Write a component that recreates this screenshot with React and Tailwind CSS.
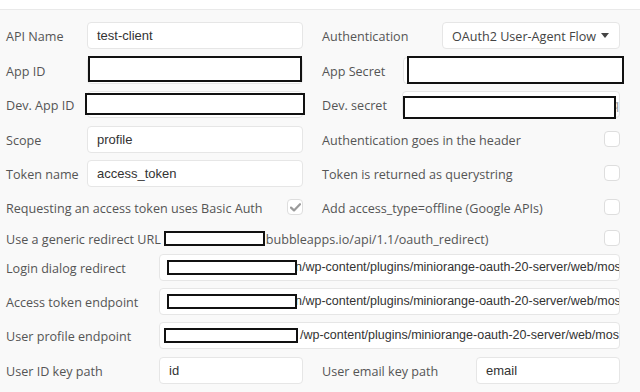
import React from "react";

const sans = "font-['Open_Sans',sans-serif]";
const arial = "font-['Liberation_Sans',Arial,sans-serif]";

function Label({ children, className = "" }) {
  return (
    <span className={`mt-[4px] text-[12.6px] text-[#555] whitespace-nowrap ${className}`}>{children}</span>
  );
}

function Field({ children, className = "", clip = true }) {
  return (
    <div
      className={`relative h-[27px] bg-white border border-[#e6e6e6] rounded-[4px] flex items-center px-[9px] text-[13px] text-[#333] whitespace-nowrap ${arial} ${clip ? "overflow-hidden" : ""} ${className}`}
    >
      {children}
    </div>
  );
}

// black redaction rectangle laid over a field
function Redact({ className = "" }) {
  return <div className={`absolute bg-white border-2 border-[#111] ${className}`} />;
}

function Check({ checked }) {
  return (
    <div className="w-[16px] h-[16px] rounded-[4px] border border-[#dedede] bg-white flex items-center justify-center">
      {checked && (
        <svg width="11" height="9" viewBox="0 0 11 9">
          <path d="M1 4.6 L4 7.4 L10 1.2" fill="none" stroke="#9a9a9a" strokeWidth="2.2" strokeLinecap="round" strokeLinejoin="round" />
        </svg>
      )}
    </div>
  );
}

function UrlField({ edge, peek }) {
  return (
    <Field className="flex-1">
      <Redact className={`left-[7px] top-[5px] h-[15px] ${edge}`} />
      <span className={`text-[12.5px] ${peek ? "pl-[126px]" : "pl-[131px]"}`}>
        {peek ? "n" : ""}/wp-content/plugins/miniorange-oauth-20-server/web/mos
      </span>
    </Field>
  );
}

export default function App() {
  return (
    <div className={`w-[640px] h-[392px] bg-[#f9f9f9] overflow-hidden ${sans}`}>
      <div className="h-[10px] bg-white border-b border-[#e9e9e9]" />

      {/* API name / authentication */}
      <div className="mt-[12px] h-[27px] flex items-center pl-[6px] pr-[20px]">
        <div className="w-[316px] flex items-center">
          <Label className="w-[81px]">API Name</Label>
          <Field className="w-[216px]">test-client</Field>
        </div>
        <div className="flex-1 flex items-center">
          <Label className="w-[120px]">Authentication</Label>
          <div className="flex-1 h-[27px] bg-white border border-[#e6e6e6] rounded-[4px] flex items-center pl-[9px] pr-[10px] text-[12.6px] text-[#444]">
            <span className="flex-1 mt-[3px]">OAuth2 User-Agent Flow</span>
            <svg width="8" height="5" viewBox="0 0 8 5">
              <path d="M0 0 H8 L4 5 Z" fill="#444" />
            </svg>
          </div>
        </div>
      </div>

      {/* App ID / App Secret */}
      <div className="mt-[8px] h-[27px] flex items-center pl-[6px] pr-[20px]">
        <div className="w-[316px] flex items-center">
          <Label className="w-[81px]">App ID</Label>
          <Field className="w-[216px]" clip={false}>
            <Redact className="left-0 right-0 top-[-2px] bottom-[1px]" />
          </Field>
        </div>
        <div className="flex-1 flex items-center">
          <Label className="w-[81px]">App Secret</Label>
          <Field className="flex-1" clip={false}>
            <Redact className="left-[3px] right-[-5px] top-[-2px] bottom-[-1px]" />
          </Field>
        </div>
      </div>

      {/* Dev App ID / Dev secret */}
      <div className="mt-[7px] h-[27px] flex items-center pl-[6px] pr-[20px]">
        <div className="w-[316px] flex items-center">
          <Label className="w-[81px]">Dev. App ID</Label>
          <Field className="w-[216px]" clip={false}>
            <Redact className="left-[-3px] right-[-3px] top-[1px] bottom-[2px]" />
          </Field>
        </div>
        <div className="flex-1 flex items-center">
          <Label className="w-[80px]">Dev. secret</Label>
          <Field className="flex-1 justify-end !px-0" clip={false}>
            <span className="text-[#999] text-[12px]">q</span>
            <Redact className="left-0 right-[3px] top-[4px] bottom-[-2px]" />
          </Field>
        </div>
      </div>

      {/* Scope */}
      <div className="mt-[8px] h-[27px] flex items-center pl-[6px] pr-[20px]">
        <div className="w-[316px] flex items-center">
          <Label className="w-[81px]">Scope</Label>
          <Field className="w-[216px]">profile</Field>
        </div>
        <div className="flex-1 flex items-center justify-between">
          <Label>Authentication goes in the header</Label>
          <Check />
        </div>
      </div>

      {/* Token name */}
      <div className="mt-[7px] h-[27px] flex items-center pl-[6px] pr-[20px]">
        <div className="w-[316px] flex items-center">
          <Label className="w-[81px]">Token name</Label>
          <Field className="w-[216px]">access_token</Field>
        </div>
        <div className="flex-1 flex items-center justify-between">
          <Label>Token is returned as querystring</Label>
          <Check />
        </div>
      </div>

      {/* basic auth / offline */}
      <div className="mt-[7px] h-[27px] flex items-center pl-[6px] pr-[20px]">
        <div className="w-[316px] flex items-center">
          <div className="w-[297px] flex items-center justify-between">
            <Label>Requesting an access token uses Basic Auth</Label>
            <Check checked />
          </div>
        </div>
        <div className="flex-1 flex items-center justify-between">
          <Label>Add access_type=offline (Google APIs)</Label>
          <Check />
        </div>
      </div>

      {/* generic redirect */}
      <div className="mt-[7px] h-[20px] flex items-center pl-[6px] pr-[20px]">
        <span className="mt-[4px] text-[12.6px] text-[#555] whitespace-nowrap">
          Use a generic redirect URL
        </span>
        <span className="inline-block ml-[3px] w-[101px] h-[15px] bg-white border-2 border-[#111]" />
        <Label className="ml-[1px]">bubbleapps.io/api/1.1/oauth_redirect)</Label>
        <div className="ml-auto">
          <Check />
        </div>
      </div>

      {/* endpoints */}
      <div className="mt-[6px] h-[27px] flex items-center pl-[6px] pr-[20px]">
        <Label className="w-[153px]">Login dialog redirect</Label>
        <UrlField edge="w-[130px]" peek />
      </div>
      <div className="mt-[7px] h-[27px] flex items-center pl-[6px] pr-[20px]">
        <Label className="w-[153px]">Access token endpoint</Label>
        <UrlField edge="w-[130px]" peek />
      </div>
      <div className="mt-[7px] h-[27px] flex items-center pl-[6px] pr-[20px]">
        <Label className="w-[153px]">User profile endpoint</Label>
        <UrlField edge="w-[134px] !left-[4px]" />
      </div>

      {/* key paths */}
      <div className="mt-[8px] h-[27px] flex items-center pl-[6px] pr-[20px]">
        <div className="w-[316px] flex items-center">
          <Label className="w-[153px]">User ID key path</Label>
          <Field className="w-[144px]">id</Field>
        </div>
        <div className="flex-1 flex items-center">
          <Label className="w-[154px]">User email key path</Label>
          <Field className="flex-1">email</Field>
        </div>
      </div>
    </div>
  );
}
